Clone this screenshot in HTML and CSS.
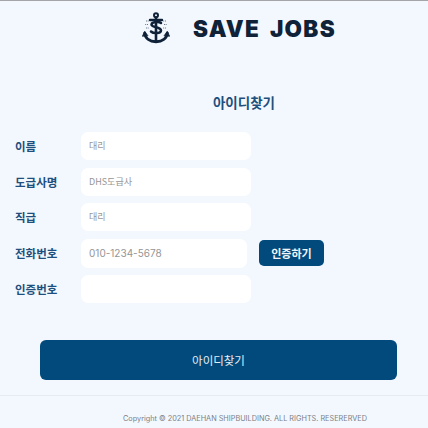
FILE: index.html
```html
<!DOCTYPE html>
<html lang="ko">
<head>
    <meta charset="UTF-8">
    <meta name="viewport" content="width=device-width, initial-scale=1.0">
    <title>SAVE JOBS - 아이디찾기</title>
    <link rel="stylesheet" href="styles.css">
</head>
<body>
    <header class="logo">
        <svg class="logo-icon" viewBox="0 0 28 32" width="28" height="32" fill="none" stroke="#0f2238" stroke-linecap="round" stroke-linejoin="round">
            <circle cx="14" cy="3.2" r="2" stroke-width="2"/>
            <path d="M8 8H20" stroke-width="2.400"/>
            <path d="M19 11C17.500 9.500 10 9.500 9.500 12.500C9 15.500 19 14.500 19 18.500C19 22 11 21.500 9 19.500" stroke-width="2.500"/>
            <path d="M14 5.500V29" stroke-width="2.600"/>
            <path d="M2.800 21C3 26.500 8 29.500 14 29.800C20 29.500 25 26.500 25.200 21" stroke-width="2.900"/>
            <path d="M0.500 24L2.600 19.500L5.800 23.500Z M27.500 24L25.400 19.500L22.200 23.500Z" fill="#0f2238" stroke-width="0.800"/>
            <path d="M4 9H6.500M21.500 9H24M3.500 12.500H6M22 12.500H24.500M4 16H6.500M21.500 16H24" stroke-width="1.200" stroke-dasharray="0.6 1.200" stroke-linecap="butt"/>
        </svg>
        <span class="logo-text">SAVE JOBS</span>
    </header>

    <h1 class="title">아이디찾기</h1>

    <form class="find-form">
        <div class="row">
            <label class="row-label">이름</label>
            <div class="field">대리</div>
        </div>
        <div class="row">
            <label class="row-label">도급사명</label>
            <div class="field">DHS도급사</div>
        </div>
        <div class="row">
            <label class="row-label">직급</label>
            <div class="field">대리</div>
        </div>
        <div class="row row-phone">
            <label class="row-label">전화번호</label>
            <div class="field field-phone">010-1234-5678</div>
            <button type="button" class="btn-verify">인증하기</button>
        </div>
        <div class="row">
            <label class="row-label">인증번호</label>
            <div class="field"></div>
        </div>
        <button type="button" class="btn-submit">아이디찾기</button>
    </form>

    <footer class="footer">Copyright © 2021 DAEHAN SHIPBUILDING. ALL RIGHTS. RESERERVED</footer>
</body>
</html>
```

FILE: styles.css
```css
html, body {
    height: 100%;
}
body {
    margin: 0;
    overflow: hidden;
    background-color: #f3f8ff;
    border-top: 1px solid #a3a5a8;
    box-sizing: border-box;
    font-family: "Noto Sans CJK KR", "Noto Sans", sans-serif;
}
.logo {
    display: flex;
    align-items: center;
    height: 32px;
    padding: 11px 0 0 142px;
}
.logo-icon {
    flex: none;
}
.logo-text {
    margin-left: 23px;
    font-family: "Inter", sans-serif;
    font-size: 22.500px;
    font-weight: 900;
    letter-spacing: 1.300px;
    word-spacing: 4px;
    color: #0f2238;
    white-space: nowrap;
}
.title {
    margin: 48px 0 0 60px;
    text-align: center;
    font-size: 13.500px;
    line-height: 20px;
    font-weight: 700;
    color: #1f4f7c;
}
.find-form {
    display: flex;
    flex-direction: column;
    margin-top: 20px;
    padding-left: 15px;
}
.row {
    display: flex;
    align-items: center;
    height: 28px;
    margin-bottom: 7.500px;
}
.row-phone {
    height: 29px;
}
.row-label {
    width: 66px;
    font-size: 11.500px;
    font-weight: 700;
    color: #1f4f7c;
}
.field {
    width: 170px;
    height: 28px;
    padding-left: 8px;
    box-sizing: border-box;
    background: #ffffff;
    border-radius: 7px;
    font-size: 9px;
    line-height: 28px;
    color: #959595;
}
.field-phone {
    width: 166px;
    height: 29px;
    font-family: "Inter", sans-serif;
    font-size: 10px;
}
.btn-verify {
    width: 65px;
    height: 26px;
    margin-left: 12px;
    padding: 0;
    border: none;
    border-radius: 5px;
    background-color: #024a7c;
    color: #f2f6fa;
    font-family: inherit;
    font-size: 11px;
    font-weight: 700;
}
.btn-submit {
    width: 357px;
    height: 40px;
    margin: 29px 0 0 25px;
    padding: 0;
    border: none;
    border-radius: 6px;
    background-color: #024a7c;
    color: #e8eef4;
    font-family: inherit;
    font-size: 11.500px;
    font-weight: 400;
}
.footer {
    margin-top: 15px;
    padding: 17px 0 0 123px;
    border-top: 1px solid #e6ebf2;
    font-family: "Inter", sans-serif;
    font-size: 7.300px;
    line-height: 12px;
    color: #7b7f86;
    white-space: nowrap;
}
```
